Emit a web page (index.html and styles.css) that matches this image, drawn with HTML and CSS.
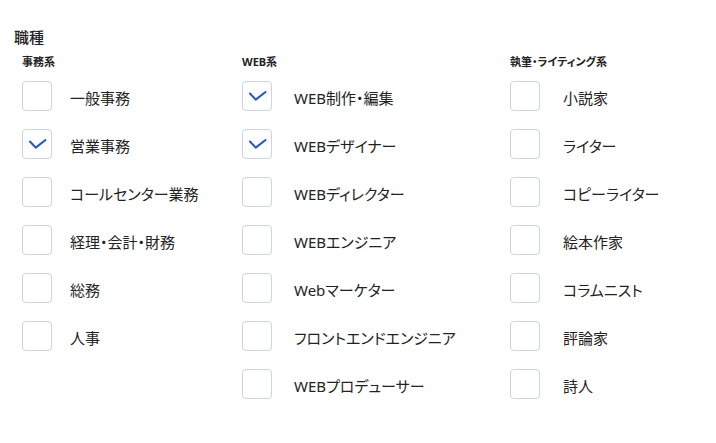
FILE: index.html
```html
<!DOCTYPE html>
<html lang="ja">
<head>
  <meta charset="UTF-8">
  <title>職種</title>
  <meta name="viewport" content="width=device-width, initial-scale=1.0">
  <link rel="stylesheet" href="styles.css">
</head>
<body>
  <section class="job-field">
    <h3 class="field-title">職種</h3>
    <div class="groups">

      <!-- 事務系 -->
      <div class="group group-office">
        <h4 class="group-title">事務系</h4>
        <ul class="options">
          <li class="option"><span class="box"></span><span class="option-text">一般事務</span></li>
          <li class="option"><span class="box checked"><svg viewBox="0 0 30 30"><polyline points="8,12.5 13.7,18.6 23.5,11"/></svg></span><span class="option-text">営業事務</span></li>
          <li class="option"><span class="box"></span><span class="option-text">コールセンター業務</span></li>
          <li class="option"><span class="box"></span><span class="option-text">経理・会計・財務</span></li>
          <li class="option"><span class="box"></span><span class="option-text">総務</span></li>
          <li class="option"><span class="box"></span><span class="option-text">人事</span></li>
        </ul>
      </div>

      <!-- WEB系 -->
      <div class="group group-web">
        <h4 class="group-title">WEB系</h4>
        <ul class="options">
          <li class="option"><span class="box checked"><svg viewBox="0 0 30 30"><polyline points="8,12.5 13.7,18.6 23.5,11"/></svg></span><span class="option-text">WEB制作・編集</span></li>
          <li class="option"><span class="box checked"><svg viewBox="0 0 30 30"><polyline points="8,12.5 13.7,18.6 23.5,11"/></svg></span><span class="option-text">WEBデザイナー</span></li>
          <li class="option"><span class="box"></span><span class="option-text">WEBディレクター</span></li>
          <li class="option"><span class="box"></span><span class="option-text">WEBエンジニア</span></li>
          <li class="option"><span class="box"></span><span class="option-text">Webマーケター</span></li>
          <li class="option"><span class="box"></span><span class="option-text">フロントエンドエンジニア</span></li>
          <li class="option"><span class="box"></span><span class="option-text">WEBプロデューサー</span></li>
        </ul>
      </div>

      <!-- 執筆・ライティング系 -->
      <div class="group group-writing">
        <h4 class="group-title">執筆・ライティング系</h4>
        <ul class="options">
          <li class="option"><span class="box"></span><span class="option-text">小説家</span></li>
          <li class="option"><span class="box"></span><span class="option-text">ライター</span></li>
          <li class="option"><span class="box"></span><span class="option-text">コピーライター</span></li>
          <li class="option"><span class="box"></span><span class="option-text">絵本作家</span></li>
          <li class="option"><span class="box"></span><span class="option-text">コラムニスト</span></li>
          <li class="option"><span class="box"></span><span class="option-text">評論家</span></li>
          <li class="option"><span class="box"></span><span class="option-text">詩人</span></li>
        </ul>
      </div>

    </div>
  </section>
</body>
</html>
```

FILE: styles.css
```css
body { margin: 0; background: #fff; color: #222; font-family: "Noto Sans", "Noto Sans CJK JP", sans-serif; font-feature-settings: "palt"; }
.job-field { padding: 27px 0 0 14px; }
.field-title { margin: 0 0 7px; font-size: 15px; line-height: 20px; font-weight: 500; }
.groups { display: flex; margin-left: 8px; }
.group-office { width: 220px; }
.group-web { width: 268px; }
.group-writing { flex: 1; }
.group-title { margin: 0 0 11px; font-size: 11px; line-height: 16px; font-weight: 700; }
.options { list-style: none; margin: 0; padding: 0; display: flex; flex-direction: column; gap: 18px; }
.option { display: flex; align-items: center; height: 30px; gap: 18px; font-size: 15px; }
.group-web .option { gap: 22px; }
.group-writing .option { gap: 23px; }
.box { width: 30px; height: 30px; box-sizing: border-box; border: 1px solid #cdd4dc; border-radius: 4px; flex: none; position: relative; }
.box svg { position: absolute; left: -1px; top: -1px; width: 30px; height: 30px; fill: none; stroke: #1f5bb5; stroke-width: 2; stroke-linecap: round; stroke-linejoin: round; }
.option-text { padding-top: 2px; }
```
